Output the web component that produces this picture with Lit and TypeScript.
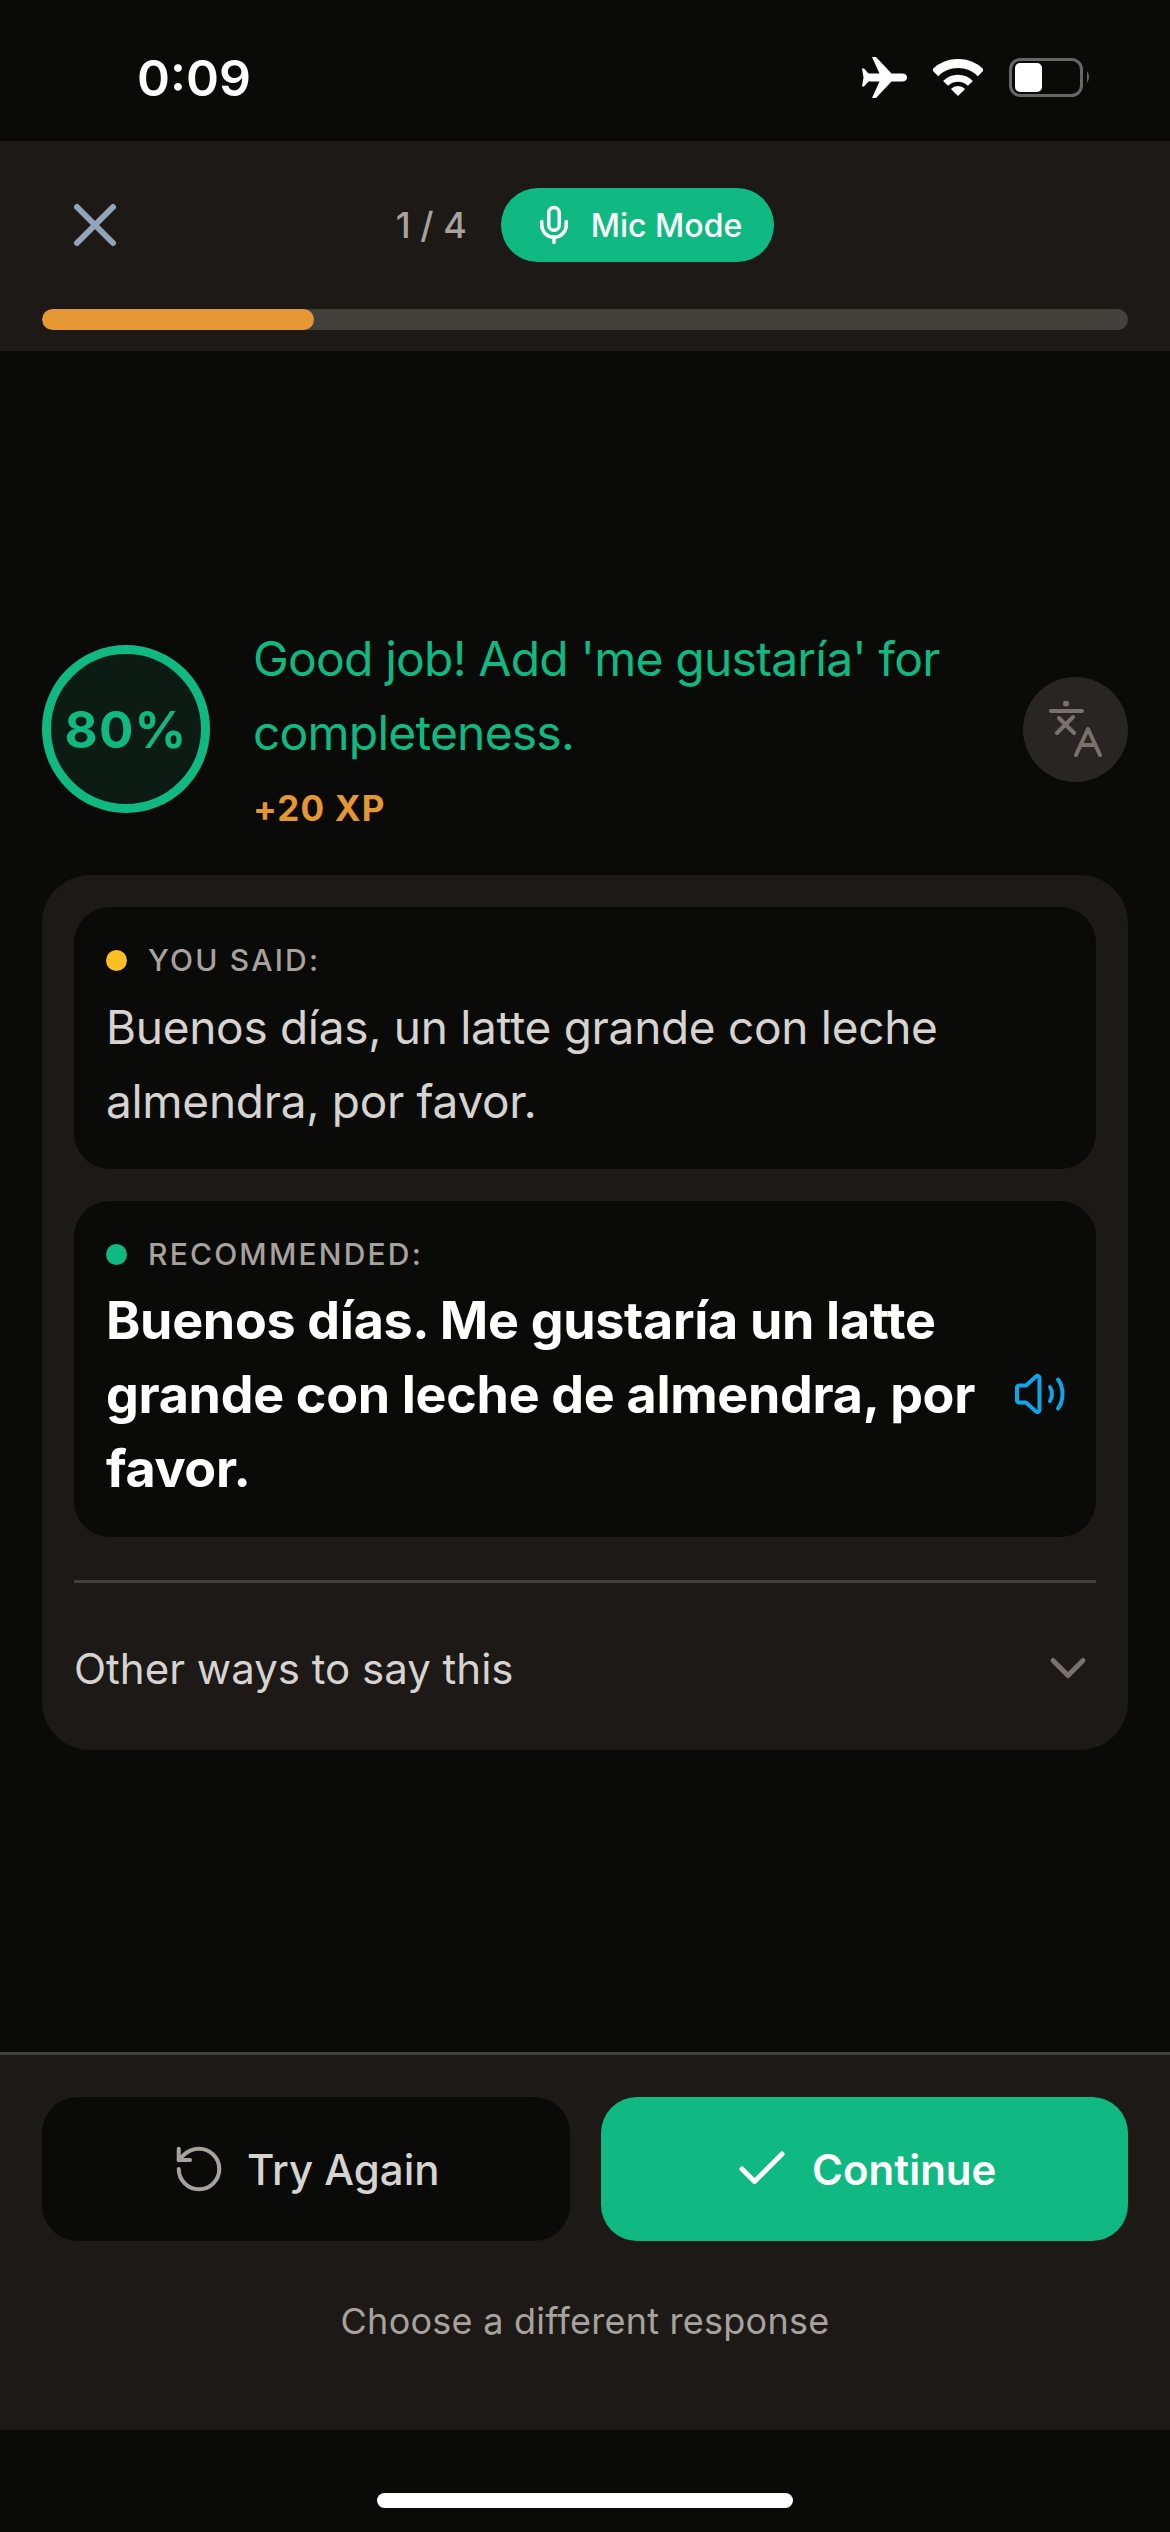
import { css, html, LitElement, svg } from 'lit';
import { customElement } from 'lit/decorators.js';

const lucide = (size: number, stroke: number, content: unknown) => html`<svg
  width="${size}"
  height="${size}"
  viewBox="0 0 24 24"
  fill="none"
  stroke="currentColor"
  stroke-width="${stroke}"
  stroke-linecap="round"
  stroke-linejoin="round"
>
  ${content}
</svg>`;

@customElement('app-root')
export class AppRoot extends LitElement {
  private renderStatusBar() {
    return html`<div class="status">
      <span class="status__time">0:09</span>
      <div class="status__icons">
        <svg width="46" height="41" viewBox="0 0 46 41" fill="#fff">
          <path
            d="M46 20.500c0-2.500-2-4-5-4H30.500L15 0h-4l7.500 16.500H7.500L3 11.500H1l1.500 9-1.500 9h2l4.500-5h11L11 41h4l15.500-16.500H41c3 0 5-1.500 5-4z"
          />
        </svg>
        <svg width="50" height="38" viewBox="0 0 50 38" fill="none" stroke="#fff">
          <path d="M2 14 A32.500 32.500 0 0 1 48 14" stroke-width="9" />
          <path d="M12.600 24.400 A17.500 17.500 0 0 1 37.400 24.400" stroke-width="7" />
          <path d="M25 37 L17.900 29.900 A10 10 0 0 1 32.100 29.900 Z" fill="#fff" stroke="none" />
        </svg>
        <svg width="83" height="39" viewBox="0 0 83 39" fill="none">
          <rect x="1.500" y="1.500" width="71" height="36" rx="10" stroke="#666" stroke-width="3" />
          <rect x="6" y="5" width="27" height="29" rx="5" fill="#fff" />
          <path d="M78 13 q4 6 0 12 z" fill="#666" />
        </svg>
      </div>
    </div>`;
  }

  private renderHeader() {
    return html`<header class="header">
      <div class="header__row">
        <span class="header__close">
          ${lucide(72, 2, svg`<path d="M18 6 6 18" /><path d="m6 6 12 12" />`)}
        </span>
        <div class="header__center">
          <span class="header__count">1 / 4</span>
          <span class="pill">
            ${lucide(
              42,
              2,
              svg`<path d="M12 2a3 3 0 0 0-3 3v7a3 3 0 0 0 6 0V5a3 3 0 0 0-3-3Z" />
                <path d="M19 10v2a7 7 0 0 1-14 0v-2" />
                <line x1="12" x2="12" y1="19" y2="22" />`
            )}
            Mic Mode
          </span>
        </div>
      </div>
      <div class="progress"><div class="progress__fill" style="width: ${(1 / 4) * 100}%"></div></div>
    </header>`;
  }

  private renderFeedback() {
    return html`<section class="feedback">
      <div class="score">80%</div>
      <div class="feedback__text">
        <p class="feedback__message">Good job! Add 'me gustaría' for completeness.</p>
        <span class="feedback__xp">+20 XP</span>
      </div>
      <button class="translate" aria-label="Translate">
        <svg
          width="53"
          height="56"
          viewBox="0 0 53 56"
          fill="none"
          stroke="currentColor"
          stroke-width="4"
          stroke-linecap="round"
          stroke-linejoin="round"
        >
          <circle cx="17" cy="2.500" r="3" fill="currentColor" stroke="none" />
          <path d="M2 10h31" />
          <path d="M10 17l15 15" />
          <path d="M24 16 8 32" />
          <path d="M27 54 39 28 51 54" />
          <path d="M32 44h14" />
        </svg>
      </button>
    </section>`;
  }

  private renderCard() {
    return html`<section class="card">
      <div class="box">
        <div class="box__label"><i class="dot dot--yellow"></i>YOU SAID:</div>
        <p class="box__text">Buenos días, un latte grande con leche almendra, por favor.</p>
      </div>
      <div class="box">
        <div class="box__label"><i class="dot dot--green"></i>RECOMMENDED:</div>
        <div class="box__row">
          <p class="box__text box__text--strong">
            Buenos días. Me gustaría un latte grande con leche de almendra, por favor.
          </p>
          <svg
            class="box__speaker"
            width="52"
            height="42"
            viewBox="0 0 52 42"
            fill="none"
            stroke="#0ea5e9"
            stroke-width="4"
            stroke-linecap="round"
            stroke-linejoin="round"
          >
            <path
              d="M3 14.500c0-1 1-2 2-2h7L22 3.500c1.500-1.300 3.500-.5 3.500 1.500v32c0 2-2 2.800-3.500 1.500L12 29.500H5c-1 0-2-1-2-2z"
            />
            <path d="M36 14c2.600 4 2.600 10 0 14" />
            <path d="M44 6.500c6 8 6 21 0 29" />
          </svg>
        </div>
      </div>
      <hr class="card__divider" />
      <div class="card__other">
        <span>Other ways to say this</span>
        <span class="card__chevron">${lucide(60, 2, svg`<path d="m6 9 6 6 6-6" />`)}</span>
      </div>
    </section>`;
  }

  private renderFooter() {
    return html`<footer class="footer">
      <div class="footer__buttons">
        <button class="action action--retry">
          <span class="action__retry-icon">
            ${lucide(
              54,
              1.8,
              svg`<path d="M3 12a9 9 0 1 0 9-9 9.750 9.750 0 0 0-6.740 2.740L3 8" /><path d="M3 3v5h5" />`
            )}
          </span>
          Try Again
        </button>
        <button class="action action--continue">
          ${lucide(60, 2, svg`<path d="M20 6 9 17l-5-5" />`)} Continue
        </button>
      </div>
      <p class="footer__hint">Choose a different response</p>
    </footer>`;
  }

  render() {
    return html`${this.renderStatusBar()} ${this.renderHeader()}
      <main class="main">${this.renderFeedback()} ${this.renderCard()}</main>
      ${this.renderFooter()}
      <div class="home"><div class="home__bar"></div></div>`;
  }

  static styles = css`
    :host {
      display: flex;
      flex-direction: column;
      width: 1170px;
      height: 2532px;
      overflow: hidden;
      background: #0a0a09;
      color: #fff;
      font-family: Inter, 'Liberation Sans', sans-serif;
    }

    p {
      margin: 0;
    }

    button {
      font: inherit;
      border: none;
      cursor: pointer;
    }

    svg {
      display: block;
      flex: none;
    }

    .status {
      height: 141px;
      flex: none;
      display: flex;
      align-items: center;
      justify-content: space-between;
      padding: 14px 78px 0 137px;
      box-sizing: border-box;
    }

    .status__time {
      font-size: 50px;
      font-weight: 600;
      line-height: 1;
    }

    .status__icons {
      display: flex;
      align-items: center;
      gap: 26px;
    }

    .header {
      height: 210px;
      flex: none;
      box-sizing: border-box;
      padding: 47px 42px 0;
      background: #1c1917;
    }

    .header__row {
      display: grid;
      grid-template-columns: 1fr auto 1fr;
      align-items: center;
      height: 74px;
    }

    .header__close {
      color: #94a3b8;
      margin-left: 17px;
      width: 72px;
      height: 72px;
    }

    .header__center {
      display: flex;
      align-items: center;
      gap: 34px;
    }

    .header__count {
      font-size: 36px;
      color: #a8a29e;
      font-weight: 500;
    }

    .pill {
      display: flex;
      align-items: center;
      gap: 16px;
      height: 74px;
      padding: 0 32px;
      box-sizing: border-box;
      border-radius: 37px;
      background: #10b981;
      font-size: 32px;
      font-weight: 500;
    }

    .progress {
      margin-top: 47px;
      height: 21px;
      border-radius: 11px;
      background: #44403c;
      overflow: hidden;
    }

    .progress__fill {
      height: 100%;
      border-radius: 11px;
      background: #e49733;
    }

    .main {
      flex: 1;
      padding: 269px 42px 0;
    }

    .feedback {
      display: flex;
      align-items: center;
      gap: 43px;
    }

    .score {
      width: 168px;
      height: 168px;
      flex: none;
      box-sizing: border-box;
      display: flex;
      align-items: center;
      justify-content: center;
      border: 9px solid #10b981;
      border-radius: 50%;
      background: #0c1c15;
      color: #10b981;
      font-size: 51px;
      font-weight: 700;
      letter-spacing: 1.2px;
    }

    .feedback__text {
      flex: 1;
      display: flex;
      flex-direction: column;
      gap: 8px;
      padding-top: 2px;
    }

    .feedback__message {
      font-size: 48px;
      line-height: 74px;
      letter-spacing: -0.8px;
      color: #10b981;
    }

    .feedback__xp {
      font-size: 35px;
      line-height: 60px;
      color: #e49733;
      font-weight: 700;
      letter-spacing: 1.2px;
    }

    .translate {
      width: 105px;
      height: 105px;
      flex: none;
      display: flex;
      align-items: center;
      justify-content: center;
      padding: 0;
      border-radius: 50%;
      background: #292524;
      color: #78716c;
    }

    .card {
      margin-top: 37px;
      padding: 32px 32px 45px;
      border-radius: 48px;
      background: #1c1917;
      display: flex;
      flex-direction: column;
      gap: 32px;
    }

    .box {
      padding: 32px;
      border-radius: 36px;
      background: #0a0a09;
    }

    .box__label {
      display: flex;
      align-items: center;
      gap: 21px;
      height: 42px;
      margin-bottom: 8px;
      font-size: 30px;
      font-weight: 500;
      letter-spacing: 2.2px;
      color: #a8a29e;
    }

    .dot {
      width: 21px;
      height: 21px;
      border-radius: 50%;
    }

    .dot--yellow {
      background: #fbbf24;
    }

    .dot--green {
      background: #10b981;
    }

    .box__text {
      font-size: 46px;
      line-height: 74px;
      letter-spacing: -0.3px;
      color: #d6d3d1;
      padding-top: 1px;
      margin-bottom: -1px;
    }

    .box__row {
      display: flex;
      align-items: center;
      gap: 24px;
    }

    .box__speaker {
      margin-right: -2px;
    }

    .box__text--strong {
      flex: 1;
      color: #fff;
      font-size: 52px;
      font-weight: 700;
    }

    .card__divider {
      margin: 11px 0 0;
      height: 3px;
      border: none;
      background: #44403c;
    }

    .card__other {
      display: flex;
      align-items: center;
      justify-content: space-between;
      height: 74px;
      margin-top: 16px;
      font-size: 42px;
      color: #d6d3d1;
    }

    .card__chevron {
      color: #78716c;
      margin-right: -2px;
    }

    .footer {
      height: 378px;
      flex: none;
      box-sizing: border-box;
      padding: 42px 42px 0;
      border-top: 3px solid #44403c;
      background: #1c1917;
    }

    .footer__buttons {
      display: grid;
      grid-template-columns: 1fr 1fr;
      gap: 31px;
    }

    .action {
      height: 144px;
      display: flex;
      align-items: center;
      justify-content: center;
      border-radius: 36px;
      font-size: 42px;
      font-weight: 600;
    }

    .action--retry {
      gap: 21px;
      background: #0a0a09;
      color: #d6d3d1;
      font-weight: 500;
    }

    .action__retry-icon {
      color: #a8a29e;
    }

    .action--continue {
      gap: 20px;
      background: #10b981;
      color: #fff;
    }

    .footer__hint {
      margin-top: 56px;
      text-align: center;
      font-size: 36px;
      line-height: 48px;
      color: #a8a29e;
      letter-spacing: 0.25px;
    }

    .home {
      flex: none;
      height: 102px;
      padding-top: 63px;
      box-sizing: border-box;
    }

    .home__bar {
      width: 416px;
      height: 15px;
      margin: 0 auto;
      border-radius: 8px;
      background: #fff;
    }
  `;
}
